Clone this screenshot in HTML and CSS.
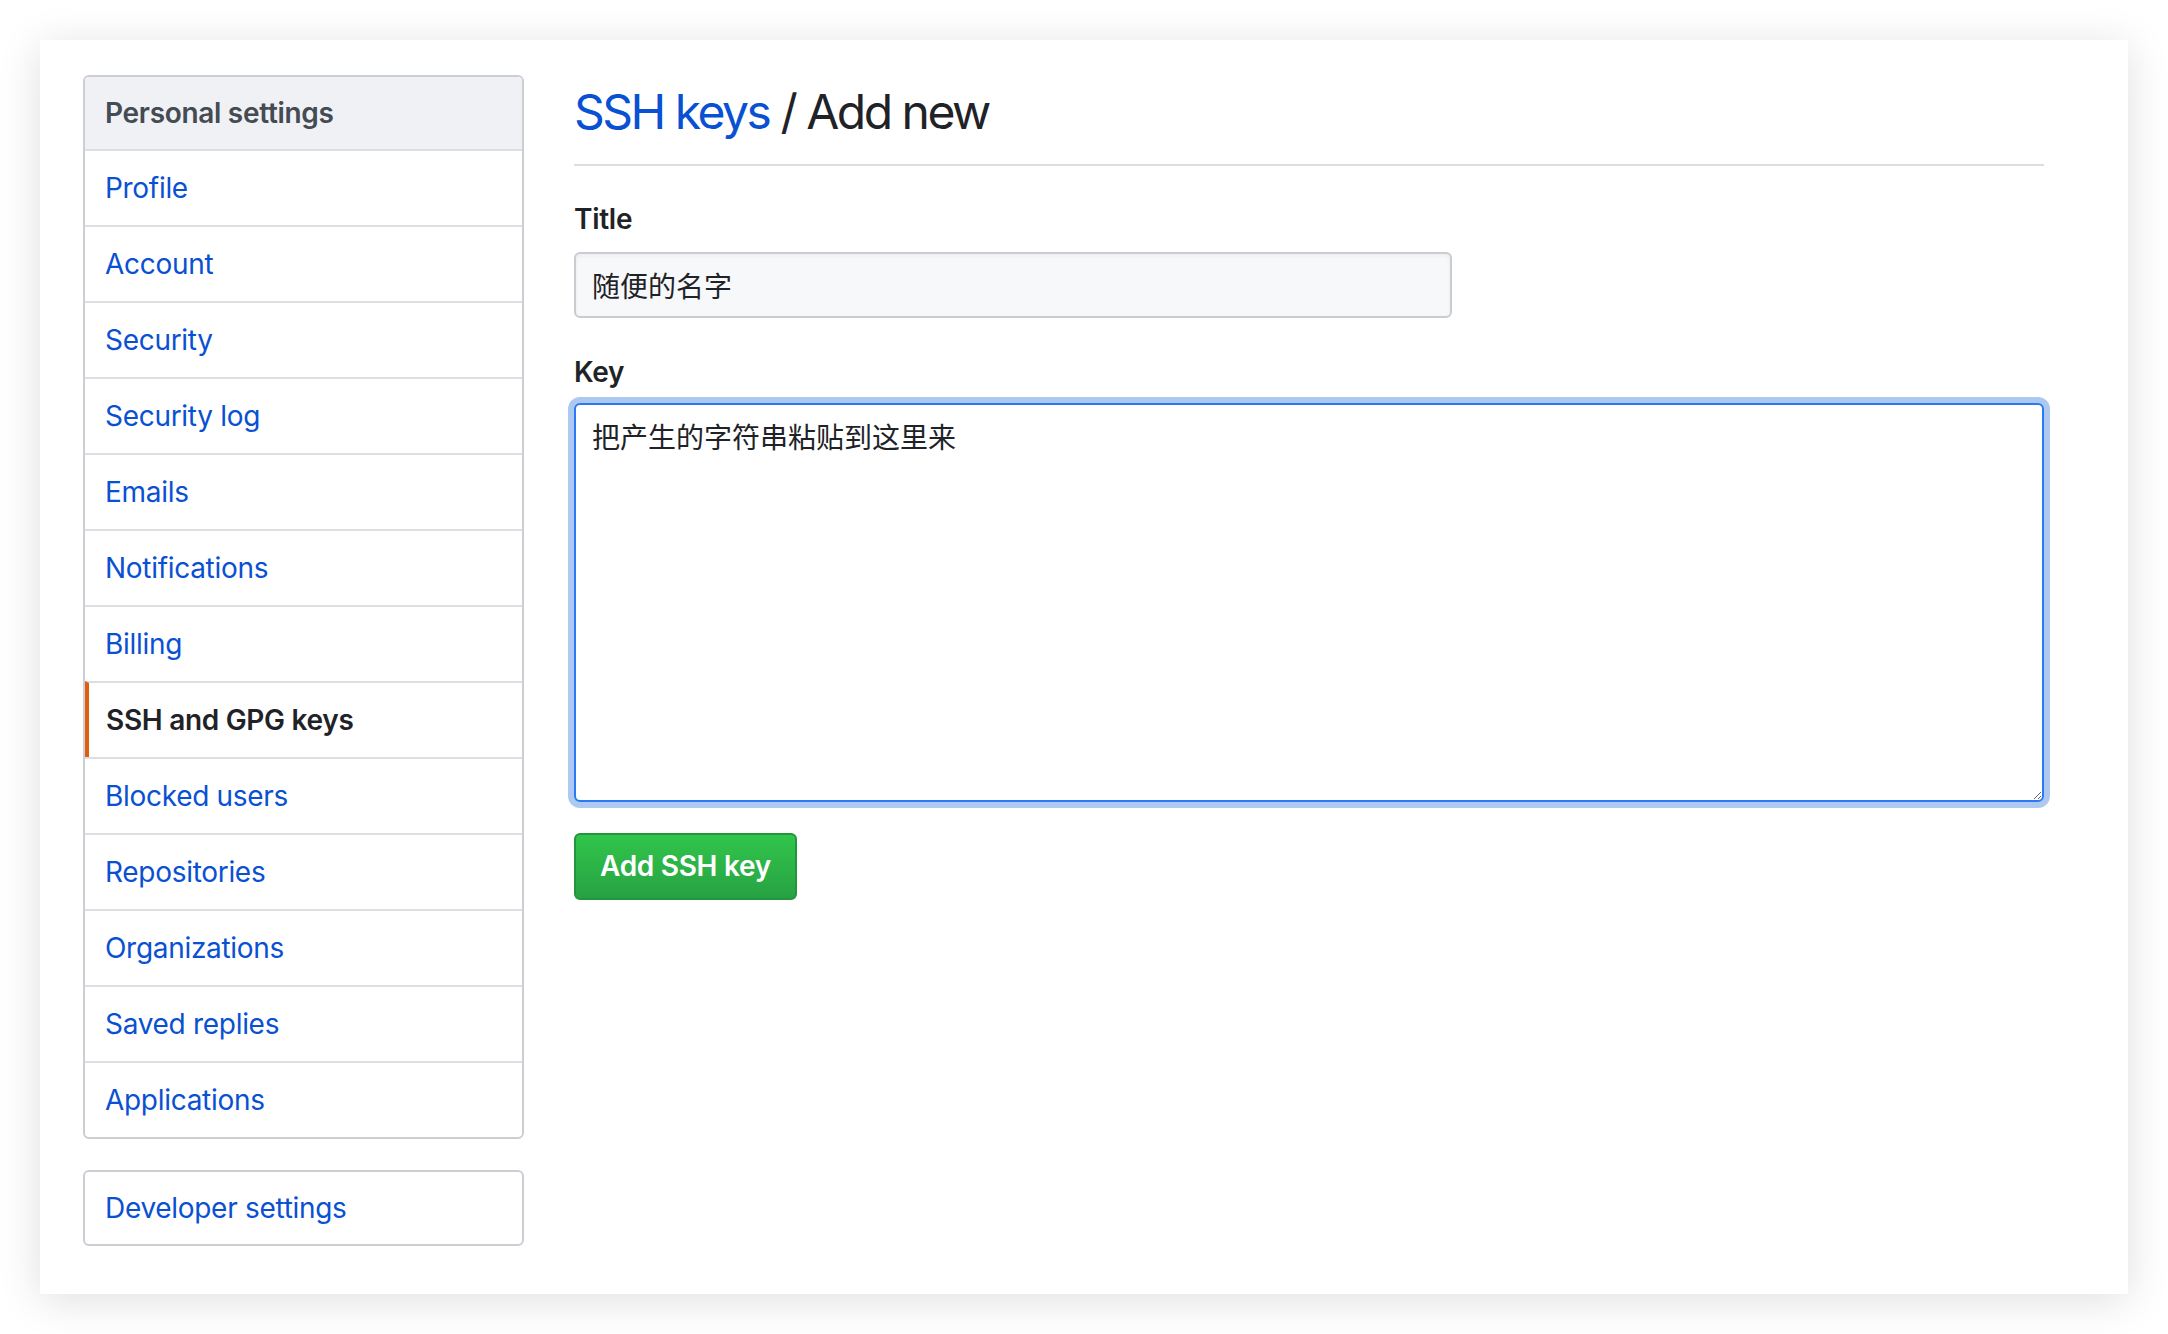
FILE: index.html
```html
<!DOCTYPE html>
<html lang="zh-CN">
<head>
<meta charset="utf-8">
<title>SSH keys / Add new</title>
<link rel="stylesheet" href="styles.css">
</head>
<body>
<div class="window">
  <aside class="sidebar">
    <nav class="menu">
      <div class="menu-heading">Personal settings</div>
      <a class="menu-item" href="#">Profile</a>
      <a class="menu-item" href="#">Account</a>
      <a class="menu-item" href="#">Security</a>
      <a class="menu-item" href="#">Security log</a>
      <a class="menu-item" href="#">Emails</a>
      <a class="menu-item" href="#">Notifications</a>
      <a class="menu-item" href="#">Billing</a>
      <a class="menu-item selected" href="#">SSH and GPG keys</a>
      <a class="menu-item" href="#">Blocked users</a>
      <a class="menu-item" href="#">Repositories</a>
      <a class="menu-item" href="#">Organizations</a>
      <a class="menu-item" href="#">Saved replies</a>
      <a class="menu-item" href="#">Applications</a>
    </nav>
    <nav class="menu menu-dev">
      <a class="menu-item first" href="#">Developer settings</a>
    </nav>
  </aside>
  <main class="main">
    <div class="subhead">
      <h2 class="subhead-heading"><a href="#">SSH keys</a> / Add new</h2>
    </div>
    <form class="form">
      <label class="label label-title" for="title">Title</label>
      <input class="input" id="title" type="text" value="随便的名字">
      <label class="label label-key" for="key">Key</label>
      <textarea class="textarea" id="key">把产生的字符串粘贴到这里来</textarea>
      <button class="btn" type="button">Add SSH key</button>
    </form>
  </main>
</div>
</body>
</html>
```
FILE: styles.css
```css
* { box-sizing: border-box; }
html, body { margin: 0; padding: 0; background: #ffffff; }
body {
  font-family: Inter, "Noto Sans CJK SC", sans-serif;
  color: #1f2328;
  width: 2168px;
  height: 1334px;
  overflow: hidden;
}
.window {
  margin: 40px 0 0 40px;
  width: 2088px;
  height: 1254px;
  background: #fff;
  box-shadow: 0 6px 40px rgba(0, 0, 0, 0.13);
  padding: 35px 0 0 43px;
  display: flex;
  gap: 50px;
  align-items: flex-start;
}
.sidebar { width: 441px; flex: none; }
.menu {
  border: 2px solid #cbced3;
  border-radius: 6px;
  overflow: hidden;
  background: #fff;
}
.menu-heading {
  background: #f0f1f5;
  padding: 15px 20px;
  font-size: 28px;
  line-height: 42px;
  font-weight: 600;
  color: #444b53;
  letter-spacing: -0.3px;
}
.menu-item {
  display: block;
  border-top: 2px solid #dcdee3;
  padding: 16px 20px;
  font-size: 28px;
  line-height: 42px;
  color: #0a50d2;
  text-decoration: none;
  letter-spacing: -0.3px;
}
.menu-item.selected {
  color: #1f2328;
  font-weight: 600;
  border-left: 4px solid #e05d10;
  padding-left: 17px;
}
.menu-dev { margin-top: 31px; }
.menu-item.first { border-top: none; padding-top: 15px; padding-bottom: 15px; }
.main { width: 1470px; flex: none; }
.subhead {
  padding-top: 7px;
  padding-bottom: 22px;
  border-bottom: 2px solid #dcdde2;
}
.subhead-heading {
  margin: 0;
  font-size: 48px;
  line-height: 60px;
  font-weight: 400;
  color: #1f2328;
  letter-spacing: -2.5px;
}
.subhead-heading a { color: #0a50d2; text-decoration: none; }
.form { display: flex; flex-direction: column; align-items: flex-start; }
.label {
  font-size: 28px;
  line-height: 42px;
  font-weight: 600;
  color: #1f2328;
  letter-spacing: -0.3px;
}
.label-title { margin-top: 32px; margin-bottom: 12px; }
.label-key { margin-top: 33px; margin-bottom: 10px; }
.input {
  width: 878px;
  height: 66px;
  border: 2px solid #c9ccd1;
  border-radius: 6px;
  background: #f7f8fa;
  padding: 0 16px;
  font-family: Inter, "Noto Sans CJK SC", sans-serif;
  font-size: 28px;
  color: #1f2328;
  box-shadow: inset 0 2px 4px rgba(27, 31, 35, 0.05);
  outline: none;
}
.textarea {
  width: 1470px;
  height: 399px;
  border: 2px solid #2a7af5;
  border-radius: 6px;
  background: #fff;
  padding: 13px 16px;
  font-family: Inter, "Noto Sans CJK SC", sans-serif;
  font-size: 28px;
  line-height: 40px;
  color: #1f2328;
  box-shadow: 0 0 0 6px #adc9f1;
  outline: none;
  resize: vertical;
}
.btn {
  margin-top: 31px;
  height: 67px;
  padding: 0 24px;
  border: 2px solid #24943d;
  border-radius: 6px;
  background: linear-gradient(#31c54b, #27a243);
  color: #fff;
  font-family: Inter, sans-serif;
  font-size: 28px;
  font-weight: 600;
  line-height: 39px;
  letter-spacing: -0.3px;
}
```
